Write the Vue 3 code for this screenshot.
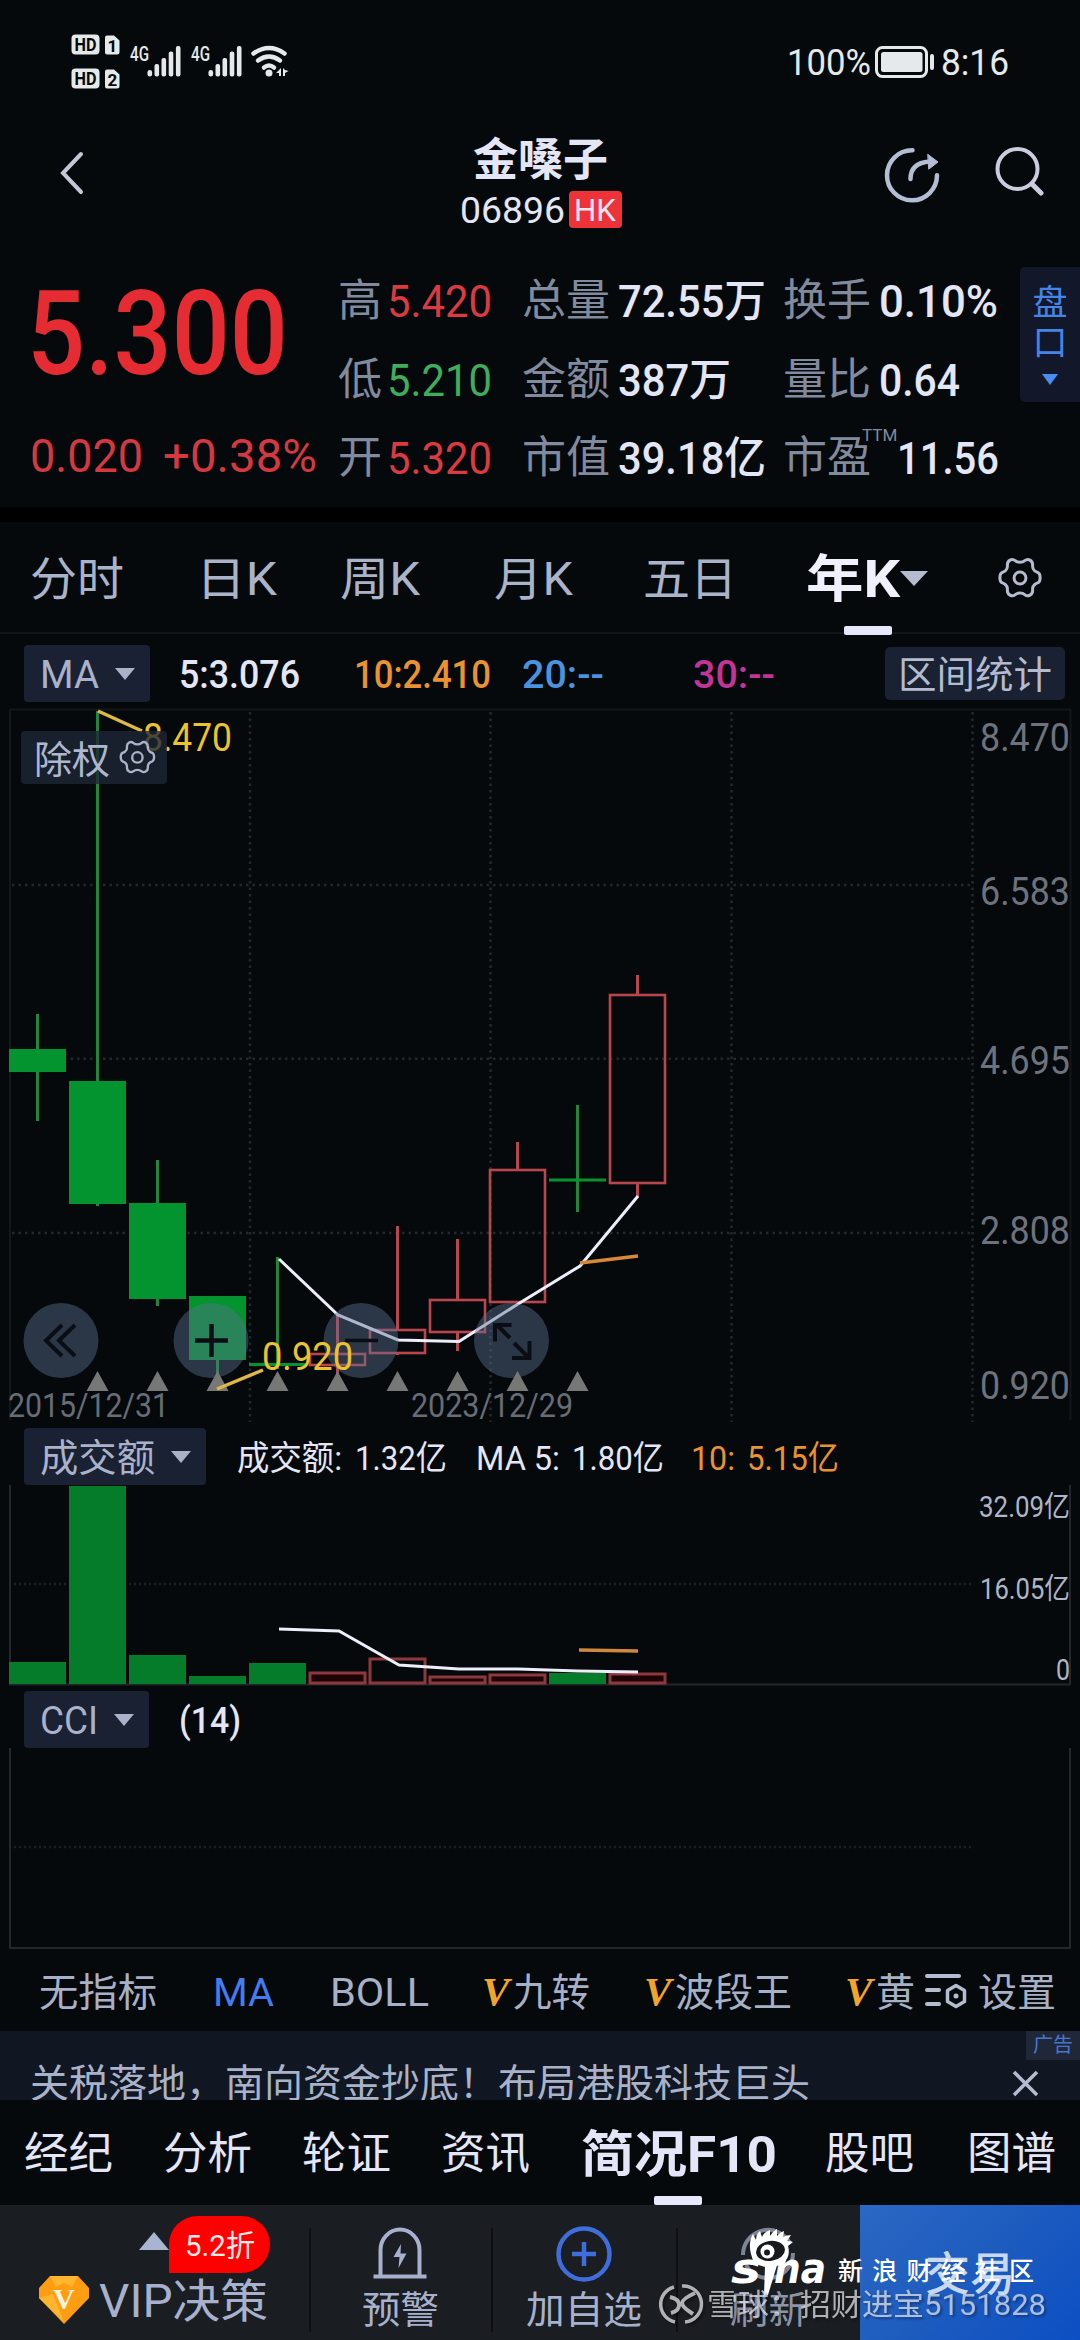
<template>
  <div class="stock-page">
    <!-- Status bar -->
    <div class="status-bar">
      <svg class="status-left" width="222" height="60" viewBox="70 30 222 60">
        <g v-for="(n, i) in [1, 2]" :key="n" :transform="`translate(0 ${i * 34})`">
          <rect x="71.5" y="34.5" width="28" height="20" rx="4" fill="#e6e9e9" />
          <text x="74.500" y="51" class="hd" textLength="22" lengthAdjust="spacingAndGlyphs">HD</text>
          <path d="M107 35.500h7l5.500 5v11.500a2.500 2.500 0 0 1-2.500 2.500h-10a2 2 0 0 1-2-2v-15a2 2 0 0 1 2-2z" fill="#e6e9e9" />
          <text x="107.500" y="51.500" class="hd sim">{{ n }}</text>
        </g>
        <g v-for="x in [0, 61]" :key="x" :transform="`translate(${x} 0)`" fill="#e6e9e9">
          <text x="130" y="60.500" class="net" textLength="19" lengthAdjust="spacingAndGlyphs">4G</text>
          <rect x="147.500" y="70" width="4.600" height="6.500" rx="2.200" />
          <rect x="154.500" y="64" width="4.600" height="12.500" rx="2" />
          <rect x="161.500" y="58" width="4.600" height="18.500" rx="2" />
          <rect x="168.700" y="51.500" width="4.600" height="25" rx="2" />
          <rect x="175.900" y="46" width="4.600" height="30.500" rx="2" />
        </g>
        <g fill="none" stroke="#e6e9e9" stroke-width="4.500" stroke-linecap="round">
          <path d="M253.500 53.500q15.500-11 31 0" />
          <path d="M258 60.500q11-8 22 0" />
          <path d="M264 67.500q5-4 10 0" />
        </g>
        <circle cx="269" cy="73" r="3.500" fill="#e6e9e9" />
        <path d="M281 68v8h-2v-3h-3zM283 68v8h2v-3l3.500-2-3.500-1z" fill="#e6e9e9" />
      </svg>
      <div class="status-right">
        <Fit t="100%" :w="84" :s="36" />
        <svg width="62" height="34" viewBox="0 0 62 34">
          <rect x="1.500" y="2.500" width="50" height="29" rx="6" fill="none" stroke="#e6e9e9" stroke-width="3" />
          <rect x="6" y="7" width="41.500" height="20" rx="2.500" fill="#e6e9e9" />
          <rect x="55" y="9" width="4" height="16" rx="2" fill="#e6e9e9" />
        </svg>
        <Fit t="8:16" :w="68" :s="36" />
      </div>
    </div>

    <!-- Title bar -->
    <div class="title-bar">
      <svg class="back" width="26" height="46" viewBox="0 0 26 46" fill="none" stroke="#c3c8d6" stroke-width="4" stroke-linecap="round">
        <path d="M22 4L4 23l18 19" />
      </svg>
      <div class="title-text">
        <div class="stock-name">金嗓子</div>
        <div class="stock-code">
          <Fit t="06896" :w="105" :s="37" />
          <span class="market"><Fit t="HK" :w="42" :s="31" /></span>
        </div>
      </div>
      <div class="title-icons">
        <svg width="56" height="58" viewBox="0 0 56 58" fill="none" stroke="#b3bdd3" stroke-width="4.500" stroke-linecap="round">
          <path d="M28.500 4.300a25 25 0 1 0 24.500 25" />
          <path d="M26.500 33q0-16 19-17.500" />
          <path d="M44 8.500l10 7.500-9 7z" fill="#b3bdd3" stroke-width="1" />
        </svg>
        <svg width="50" height="50" viewBox="0 0 50 50" fill="none" stroke="#c9cddd" stroke-width="4" stroke-linecap="round">
          <circle cx="22.500" cy="23" r="20" />
          <path d="M37 38l9 9" stroke-width="5" />
        </svg>
      </div>
    </div>

    <!-- Quote -->
    <div class="quote">
      <div class="price">
        <Fit class="price-main" t="5.300" :w="261" :s="117" />
        <div class="price-change">
          <Fit t="0.020" :w="113" :s="47" />
          <Fit t="+0.38%" :w="154" :s="47" />
        </div>
      </div>
      <div class="facts">
        <template v-for="row in facts" :key="row[0].label">
          <div v-for="f in row" :key="f.label" class="fact">
            <span class="fact-label">{{ f.label }}<i v-if="f.sup" class="sup">{{ f.sup }}</i></span>
            <Fit class="fact-value" :class="[f.tone, { shifted: f.sup }]" :t="f.value" :w="f.w" :s="44" />
          </div>
        </template>
      </div>
      <div class="panel-btn">
        <span>盘</span>
        <span>口</span>
        <svg width="16" height="11" viewBox="0 0 16 11"><path d="M0 0h16l-8 11z" fill="#4a8df2" /></svg>
      </div>
    </div>
    <div class="band"></div>

    <!-- Period tabs -->
    <div class="periods">
      <Fit v-for="p in periods" :key="p.t" :t="p.t" :w="p.w" :s="46" />
      <div class="period-active">
        <Fit t="年K" :w="94" :s="51" />
        <svg width="28" height="15" viewBox="0 0 28 15"><path d="M0 0h28l-14 15z" fill="#b4bbcd" /></svg>
        <i class="underline"></i>
      </div>
      <svg class="gear" width="42" height="42" viewBox="0 0 24 24" fill="none" stroke="#b5bccd" stroke-width="1.700" stroke-linejoin="round">
        <path :d="gear" />
        <circle cx="12" cy="12" r="3.400" />
      </svg>
    </div>

    <!-- MA line -->
    <div class="ma-row">
      <div class="select"><Fit t="MA" :w="59" :s="38" /><svg width="20" height="12" viewBox="0 0 20 12"><path d="M0 0h20l-10 12z" /></svg></div>
      <Fit class="ma5" t="5:3.076" :w="121" :s="38" />
      <Fit class="ma10" t="10:2.410" :w="137" :s="38" />
      <Fit class="ma20" t="20:--" :w="82" :s="38" />
      <Fit class="ma30" t="30:--" :w="82" :s="38" />
      <div class="range-btn"><Fit t="区间统计" :w="154" :s="38" /></div>
    </div>

    <!-- Candles -->
    <svg class="chart" width="1080" height="720" viewBox="0 708 1080 720">
      <g stroke="#12171d" stroke-width="2" fill="none">
        <path d="M10 709.500H1071M10 709V1420M1070.500 709V1420" />
      </g>
      <g stroke="#22282e" stroke-width="2.500" stroke-dasharray="2.500 4" fill="none">
        <path v-for="x in [250, 490.500, 731.500, 972.500]" :key="x" :d="`M${x} 712V1422`" />
        <path v-for="y in [885, 1058.700, 1233]" :key="y" :d="`M12 ${y}H972`" />
      </g>
      <g class="axis">
        <text v-for="a in priceAxis" :key="a.y" x="980" :y="a.y" textLength="90" lengthAdjust="spacingAndGlyphs">{{ a.t }}</text>
      </g>
      <g v-for="(c, i) in candles" :key="i">
        <template v-if="c.up">
          <path :d="`M${cx(i)} ${c.high}V${c.top}M${cx(i)} ${c.bottom}V${c.low}`" stroke="#b9464d" stroke-width="3" />
          <rect :x="cx(i) - 27.500" :y="c.top + 1" width="55" :height="c.bottom - c.top - 2" fill="none" stroke="#b9464d" stroke-width="2.600" />
        </template>
        <template v-else>
          <path :d="`M${cx(i)} ${c.high}V${c.low}`" stroke="#22863a" stroke-width="3" />
          <rect :x="cx(i) - 28.500" :y="c.top" width="57" :height="c.bottom - c.top" fill="#03932f" />
        </template>
      </g>
      <g fill="none" stroke-width="3">
        <path d="M279 1259L338 1315L398 1340L459 1341.500L518 1304L580 1266L638 1196" stroke="#eceefa" />
        <path d="M580 1263L638 1256" stroke="#d9883a" stroke-width="3.500" />
      </g>
      <g class="tag-text">
        <path d="M98 711L142 731" />
        <text x="143" y="750.500" textLength="89" lengthAdjust="spacingAndGlyphs">8.470</text>
      </g>

      <!-- Adjustment badge, half transparent over the candles -->
      <rect x="21" y="731" width="146" height="53" rx="4" fill="#1e2637" fill-opacity=".78" />
      <text x="34" y="773" class="adjust" textLength="76" lengthAdjust="spacingAndGlyphs">除权</text>
      <g transform="translate(120 740) scale(1.450)" fill="none" stroke="#aab3c8" stroke-width="1.600" stroke-linejoin="round">
        <path :d="gear" />
        <circle cx="12" cy="12" r="3.600" />
      </g>

      <!-- Round controls -->
      <circle v-for="x in [61, 211, 361, 511.500]" :key="x" :cx="x" cy="1340.500" r="37.500" fill="#5d7292" fill-opacity=".44" />
      <g fill="none" stroke="#0a0e14" stroke-width="4">
        <path d="M62 1325L46 1340.500L62 1356M75 1325L59 1340.500L75 1356" />
        <path d="M195 1340.500h33M211.500 1324v33" stroke-width="4.500" />
        <path d="M345 1340.500h33" stroke-width="3.500" />
        <path d="M510 1338l-14-14M511.500 1325h-16.500v16.500" />
        <path d="M514 1343l14 14M512 1358h17.500v-17" />
      </g>
      <path v-for="i in 9" :key="i" :d="`M${cx(i)} 1371l11 20h-22z`" fill="#757875" />
      <g class="tag-text">
        <path d="M217 1389L263 1370" />
        <text x="262" y="1370" textLength="91" lengthAdjust="spacingAndGlyphs">0.920</text>
      </g>
      <g class="dates">
        <text x="8" y="1416.500" textLength="161" lengthAdjust="spacingAndGlyphs">2015/12/31</text>
        <text x="411" y="1416.500" textLength="162" lengthAdjust="spacingAndGlyphs">2023/12/29</text>
      </g>
    </svg>

    <!-- Turnover -->
    <div class="vol-row">
      <div class="select"><Fit t="成交额" :w="115" :s="38" /><svg width="20" height="12" viewBox="0 0 20 12"><path d="M0 0h20l-10 12z" /></svg></div>
      <Fit t="成交额:" :w="105" :s="34" />
      <Fit t="1.32亿" :w="92" :s="34" />
      <Fit t="MA 5:" :w="84" :s="34" />
      <Fit t="1.80亿" :w="92" :s="34" />
      <Fit class="ma10" t="10:" :w="44" :s="34" />
      <Fit class="ma10" t="5.15亿" :w="92" :s="34" />
    </div>
    <svg class="chart" width="1080" height="206" viewBox="0 1485 1080 206">
      <path d="M10 1485V1684.500H1070V1485" fill="none" stroke="#23272c" stroke-width="2" />
      <path d="M14 1584H972" stroke="#1b2026" stroke-width="2.500" stroke-dasharray="2 3" />
      <g v-for="(v, i) in volumes" :key="i">
        <rect v-if="v.up" :x="cx(i) - 27.500" :y="v.y" width="55" :height="1683 - v.y" :fill="v.y > 1665 ? '#1c0306' : 'none'" stroke="#8e383d" stroke-width="3" />
        <rect v-else :x="cx(i) - 28.500" :y="v.y" width="57" :height="1684 - v.y" fill="#047c2a" />
      </g>
      <g fill="none" stroke-width="3.500">
        <path d="M279 1629L339 1631L399 1665L459 1669H518L578 1671L638 1672" stroke="#eceefa" stroke-width="3" />
        <path d="M579 1650L638 1651" stroke="#d0873f" />
      </g>
      <g class="vol-axis">
        <text x="979" y="1516.500" textLength="91" lengthAdjust="spacingAndGlyphs">32.09亿</text>
        <text x="980" y="1598.500" textLength="90" lengthAdjust="spacingAndGlyphs">16.05亿</text>
        <text x="1056" y="1680" textLength="14" lengthAdjust="spacingAndGlyphs">0</text>
      </g>
    </svg>

    <!-- CCI -->
    <div class="cci-row">
      <div class="select"><Fit t="CCI" :w="58" :s="38" /><svg width="20" height="12" viewBox="0 0 20 12"><path d="M0 0h20l-10 12z" /></svg></div>
      <Fit t="(14)" :w="62" :s="36" />
    </div>
    <svg class="chart" width="1080" height="203" viewBox="0 1748 1080 203">
      <path d="M10 1748V1948H1070V1748" fill="none" stroke="#23272c" stroke-width="2" />
      <path d="M14 1847H972" stroke="#1b2026" stroke-width="2.500" stroke-dasharray="2 3" />
    </svg>

    <!-- Indicator tabs -->
    <div class="indicators">
      <Fit t="无指标" :w="118" :s="39" />
      <Fit class="on" t="MA" :w="61" :s="39" />
      <Fit t="BOLL" :w="99" :s="39" />
      <span class="vip"><b>V</b><Fit t="九转" :w="77" :s="39" /></span>
      <span class="vip"><b>V</b><Fit t="波段王" :w="117" :s="39" /></span>
      <span class="vip clipped"><b>V</b><Fit t="黄" :w="39" :s="39" /></span>
      <span class="settings">
        <svg width="44" height="40" viewBox="0 0 44 40" fill="none" stroke="#b4bcd0" stroke-width="4" stroke-linecap="round">
          <path d="M3 5h32M3 19h12M3 33h12" />
          <path d="M32 14.500l8.500 5v11l-8.500 5-8.500-5v-11z" stroke-linejoin="round" stroke-width="3.500" />
          <circle cx="32" cy="25" r="2.500" fill="#b4bcd0" stroke="none" />
        </svg>
        <Fit t="设置" :w="78" :s="39" />
      </span>
    </div>

    <!-- Ad -->
    <div class="ad">
      <Fit t="关税落地，南向资金抄底！布局港股科技巨头" :w="780" :s="39" />
      <svg class="ad-close" width="28" height="28" viewBox="0 0 28 28" stroke="#b4bcd0" stroke-width="3.500"><path d="M2 2l23 23M25 2L2 25" /></svg>
      <span class="ad-tag">广告</span>
    </div>

    <!-- Section tabs -->
    <div class="sections">
      <Fit v-for="s in sections.slice(0, 4)" :key="s" :t="s" :w="89" :s="44.500" />
      <div class="section-active">
        <Fit t="简况F10" :w="196" :s="50" />
        <i class="underline"></i>
      </div>
      <Fit v-for="s in sections.slice(4)" :key="s" :t="s" :w="89" :s="44.500" />
    </div>

    <!-- Bottom bar -->
    <div class="bottom">
      <div class="vip-cell">
        <svg width="50" height="48" viewBox="0 0 50 48">
          <path d="M11 0h28l11 12v10L25 48 0 22V12z" fill="#ff9d12" />
          <path d="M11 0h28l-6 11-8-4-8 4zM0 22l14-4 11 28z" fill="#ffb52e" />
          <text x="14" y="33" class="gem">V</text>
        </svg>
        <Fit t="VIP决策" :w="169" :s="46" />
        <svg class="up-mark" width="30" height="18" viewBox="0 0 30 18"><path d="M0 18L15 0l15 18z" fill="#a7b4d2" /></svg>
        <span class="badge"><Fit t="5.2折" :w="70" :s="30" /></span>
      </div>
      <div class="cell">
        <svg width="56" height="54" viewBox="0 0 56 54" fill="none" stroke="#a7b1cd" stroke-width="4">
          <path d="M8.500 49V24a19.500 20.500 0 0 1 39 0v25M1.500 50.500h53" />
          <path d="M29 18l-7.500 13h6l-1 11 8-14.500h-6z" fill="#a7b1cd" stroke="none" />
        </svg>
        <Fit t="预警" :w="77" :s="38" />
      </div>
      <div class="cell">
        <svg width="56" height="56" viewBox="0 0 56 56" fill="none" stroke="#3f6ddb" stroke-width="4.500">
          <circle cx="28" cy="28" r="25.500" />
          <path d="M16 28h24M28 16v24" />
        </svg>
        <Fit t="加自选" :w="116" :s="38" />
      </div>
      <div class="cell last">
        <svg width="56" height="56" viewBox="0 0 56 56" fill="none" stroke="#7e8496" stroke-width="4">
          <path d="M3 29a25 25 0 0 1 47-12M53 27a25 25 0 0 1-47 12" />
        </svg>
        <Fit t="刷新" :w="77" :s="38" />
      </div>
      <div class="trade"><Fit t="交易" :w="90" :s="46" /></div>

      <!-- Source marks laid over the bar -->
      <svg class="marks" width="360" height="115" viewBox="650 2220 360 115">
        <g fill="#fff">
          <path d="M751 2254q-3-12 2-20l3 6q0-6 4-9l2 6q2-5 8-7l0 6q3-5 7-7l0 7q3-4 7-5l-1 6q4-2 8-2l-4 6q4 0 6 1l-5 4q3 11-5 17q-7 5-16 4q-14-1-16-13z" />
          <ellipse cx="770.500" cy="2251" rx="14.500" ry="10" transform="rotate(-8 770 2251)" fill="#17191d" />
          <circle cx="767.500" cy="2251.500" r="7" />
          <circle cx="767" cy="2252.500" r="3" fill="#17191d" />
          <path d="M765 2266l8-4h5l-10 33h-4z" />
          <text x="731" y="2283" class="sina" textLength="30" lengthAdjust="spacingAndGlyphs">s</text>
          <text x="774" y="2283" class="sina" textLength="52" lengthAdjust="spacingAndGlyphs">na</text>
          <text x="838" y="2280" class="club" textLength="196">新浪财经社区</text>
        </g>
        <g class="shade" opacity=".76">
          <g fill="none" stroke="#dfe0e4" stroke-width="3.500">
            <path d="M675 2322a18 18 0 0 1-1-35M682 2286a18 18 0 0 1 3 36" />
            <path d="M670 2297q9 2 9 8t-8 8M695 2293q-13 6-13 10t11 11" stroke-width="4" />
          </g>
          <text x="707" y="2315" class="owner" textLength="339" lengthAdjust="spacingAndGlyphs">雪球：招财进宝5151828</text>
        </g>
      </svg>
    </div>
  </div>
</template>

<script setup>
import { h } from 'vue'

const Fit = (props) =>
  h('svg', { class: 'fit', width: props.w, height: props.s }, [
    h('text', {
      x: 0,
      y: props.s * 0.87,
      'font-size': props.s,
      textLength: props.w,
      lengthAdjust: 'spacingAndGlyphs'
    }, props.t)
  ])
Fit.props = ['t', 'w', 's']

// Six soft lobes, notched at the top and bottom
const gear = 'M12 3Q13.700 3 14.700 2.100Q16.200 .9 17.700 1.800Q19.400 2.800 19.200 4.800Q19 6.800 20.400 7.900Q21.200 8.500 22.300 8.900Q23.500 9.500 23.500 11.800Q23.500 14.100 22.300 14.700Q21.200 15.100 20.400 15.700Q19 16.800 19.200 18.800Q19.400 20.800 17.700 21.800Q16.200 22.700 14.700 21.500Q13.700 20.600 12 20.600Q10.300 20.600 9.300 21.500Q7.800 22.700 6.300 21.800Q4.600 20.800 4.800 18.800Q5 16.800 3.600 15.700Q2.800 15.100 1.700 14.700Q.5 14.100 .5 11.800Q.5 9.500 1.700 8.900Q2.800 8.500 3.600 7.900Q5 6.800 4.800 4.800Q4.600 2.800 6.300 1.800Q7.800 .9 9.300 2.100Q10.300 3 12 3Z'

const facts = [
  [
    { label: '高', value: '5.420', w: 105, tone: 'red' },
    { label: '总量', value: '72.55万', w: 148 },
    { label: '换手', value: '0.10%', w: 119 }
  ],
  [
    { label: '低', value: '5.210', w: 105, tone: 'green' },
    { label: '金额', value: '387万', w: 113 },
    { label: '量比', value: '0.64', w: 81 }
  ],
  [
    { label: '开', value: '5.320', w: 105, tone: 'red' },
    { label: '市值', value: '39.18亿', w: 148 },
    { label: '市盈', value: '11.56', w: 102, sup: 'TTM' }
  ]
]

const periods = [
  { t: '分时', w: 94 },
  { t: '日K', w: 81 },
  { t: '周K', w: 80 },
  { t: '月K', w: 79 },
  { t: '五日', w: 94 }
]

const sections = ['经纪', '分析', '轮证', '资讯', '股吧', '图谱']

const priceAxis = [
  { t: '8.470', y: 751 },
  { t: '6.583', y: 905 },
  { t: '4.695', y: 1074 },
  { t: '2.808', y: 1244 },
  { t: '0.920', y: 1399 }
]

const cx = (i) => 37.5 + i * 60

const candles = [
  { high: 1014, top: 1049, bottom: 1072, low: 1121 },
  { high: 711, top: 1081, bottom: 1204, low: 1206 },
  { high: 1160, top: 1203, bottom: 1299, low: 1306 },
  { high: 1296, top: 1296, bottom: 1360, low: 1389 },
  { high: 1257, top: 1363, bottom: 1366, low: 1369 },
  { high: 1315, top: 1353, bottom: 1366, low: 1375, up: true },
  { high: 1226, top: 1329, bottom: 1354, low: 1355, up: true },
  { high: 1239, top: 1299, bottom: 1333, low: 1351, up: true },
  { high: 1142, top: 1169, bottom: 1303, low: 1303, up: true },
  { high: 1105, top: 1178.5, bottom: 1181.5, low: 1212 },
  { high: 975, top: 994, bottom: 1184, low: 1197, up: true }
]

const volumes = [
  { y: 1662 },
  { y: 1486 },
  { y: 1655 },
  { y: 1676 },
  { y: 1663 },
  { y: 1673, up: true },
  { y: 1659, up: true },
  { y: 1677, up: true },
  { y: 1675, up: true },
  { y: 1673 },
  { y: 1674, up: true }
]
</script>

<style>
body {
  background: #05090c;
}

.fit {
  display: block;
  flex: none;
  overflow: visible;
}

.fit text {
  fill: currentColor;
  white-space: pre;
}
</style>

<style scoped>
.stock-page {
  width: 1080px;
  height: 2340px;
  overflow: hidden;
  background: #05090c;
  color: #e4e6f6;
  font-family: Roboto, "Noto Sans CJK SC", sans-serif;
}

.stock-page svg {
  display: block;
  flex: none;
}

.status-bar {
  height: 120px;
  box-sizing: border-box;
  padding: 30px 68px 0 70px;
  display: flex;
  justify-content: space-between;
}

.hd {
  font-size: 18px;
  font-weight: 700;
  fill: #05090c;
}

.sim {
  font-size: 17px;
}

.net {
  font-size: 20px;
  font-weight: 500;
}

.status-right {
  display: flex;
  align-items: center;
  height: 64px;
  gap: 4px;
  color: #e6e9e9;
  margin-right: 3px;
}

.title-bar {
  height: 128px;
  display: grid;
  grid-template-columns: 398px 285px 397px;
}

.back {
  margin: 30px 0 0 59px;
}

.title-text {
  display: flex;
  flex-direction: column;
  align-items: center;
}

.stock-name {
  margin-top: 19px;
  height: 44px;
  line-height: 44px;
  font-size: 45px;
  font-weight: 700;
}

.stock-code {
  display: flex;
  align-items: center;
  gap: 4px;
  margin-top: 8px;
}

.market {
  display: flex;
  align-items: center;
  justify-content: center;
  width: 53px;
  height: 37px;
  border-radius: 4px;
  background: #ee3338;
}

.title-icons {
  display: flex;
  justify-content: space-between;
  padding: 26px 35px 0 201px;
}

.quote {
  height: 259px;
  display: grid;
  grid-template-columns: 338px 682px 60px;
}

.price {
  color: #e62c33;
  padding-left: 27px;
}

.price-main {
  margin-top: 24px;
  font-weight: 500;
}

.price-change {
  display: flex;
  gap: 20px;
  margin-top: 42px;
  margin-left: 3px;
  color: #d5383f;
}

.facts {
  display: grid;
  grid-template-columns: 184px 261px 237px;
  grid-template-rows: repeat(3, 78.5px);
  margin-top: 14px;
}

.fact {
  display: flex;
  align-items: center;
  gap: 8px;
  font-weight: 500;
}

.fact-label {
  position: relative;
  font-size: 44px;
  line-height: 1;
  font-weight: 400;
  color: #828a9e;
}

.sup {
  position: absolute;
  top: -9px;
  left: 79px;
  font-size: 17px;
  font-style: normal;
}

.shifted {
  margin-left: 18px;
}

.red {
  color: #db3a40;
  font-weight: 400;
  margin-left: -3px;
}

.green {
  color: #3fae5c;
  font-weight: 400;
  margin-left: -3px;
}

.panel-btn {
  display: flex;
  flex-direction: column;
  align-items: center;
  height: 135px;
  margin-top: 19px;
  box-sizing: border-box;
  padding-top: 17px;
  border-radius: 5px 0 0 5px;
  background: #121829;
  color: #4585e6;
  font-size: 35px;
  line-height: 40px;
}

.panel-btn svg {
  margin-top: 10px;
}

.band {
  height: 15px;
  background: #000;
}

.periods {
  height: 112px;
  box-sizing: border-box;
  padding-left: 30px;
  display: grid;
  grid-template-columns: 166px 144px 154px 149px 163px 193px 60px;
  align-items: center;
  color: #aab3c7;
  border-bottom: 2px solid #12161c;
}

.period-active {
  position: relative;
  display: flex;
  align-items: center;
  height: 112px;
  color: #f0f1fc;
  font-weight: 700;
}

.gear {
  overflow: visible;
}

.underline {
  position: absolute;
  left: 38px;
  bottom: -1px;
  width: 48px;
  height: 9px;
  border-radius: 2px;
  background: #e6e8fb;
}

.ma-row {
  height: 74px;
  box-sizing: border-box;
  display: grid;
  grid-template-columns: 155px 175px 168px 171px 192px 180px;
  padding: 5px 0 0 24px;
  align-items: center;
  font-weight: 500;
}

.select {
  display: flex;
  align-items: center;
  justify-self: start;
  gap: 16px;
  height: 57px;
  padding: 0 15px 0 16px;
  border-radius: 4px;
  background: #1a2133;
  color: #a9b2c9;
  fill: #a9b2c9;
  font-weight: 400;
}

.range-btn {
  display: flex;
  align-items: center;
  justify-content: center;
  height: 53px;
  border-radius: 5px;
  background: #1a2133;
  color: #b4bbcf;
  font-weight: 400;
}

.ma10 {
  color: #ea922f;
}

.ma20 {
  color: #4b92df;
}

.ma30 {
  color: #c23496;
}

.chart text {
  font-size: 39px;
}

.chart .axis text {
  fill: #6d727c;
}

.tag-text path {
  stroke: #dfb743;
  stroke-width: 3.5;
}

.tag-text text {
  fill: #edc32d;
}

.chart .adjust {
  font-size: 38px;
  fill: #aeb7ce;
}

.chart .dates text {
  font-size: 33px;
  fill: #686c74;
}

.chart .vol-axis text {
  font-size: 29px;
  fill: #aeb5c6;
}

.vol-row {
  height: 57px;
  padding-left: 24px;
  display: grid;
  grid-template-columns: 213px 118px 121px 96px 119px 56px 92px;
  align-items: center;
}

.cci-row {
  height: 57px;
  padding-left: 24px;
  display: grid;
  grid-template-columns: 155px 62px;
  align-items: center;
  font-weight: 500;
}

.indicators {
  height: 80px;
  display: grid;
  grid-template-columns: 174px 117px 152px 162px 201px 71px 164px;
  align-items: center;
  padding-left: 39px;
  color: #a7b0c5;
}

.on {
  color: #427cf0;
}

.vip {
  display: flex;
  align-items: center;
}

.vip b {
  width: 31px;
  font: italic 700 41px "Liberation Serif", serif;
  color: #f3a42a;
}

.clipped {
  overflow: hidden;
}

.settings {
  display: flex;
  align-items: center;
  gap: 10px;
  margin-left: 8px;
}

.ad {
  position: relative;
  height: 69px;
  overflow: hidden;
  box-sizing: border-box;
  padding: 32px 40px 0 30px;
  display: flex;
  justify-content: space-between;
  background: #111722;
  color: #a9b2c8;
}

.ad-close {
  margin-top: 7px;
}

.ad-tag {
  position: absolute;
  top: 0;
  right: 0;
  width: 54px;
  height: 29px;
  line-height: 29px;
  text-align: center;
  font-size: 20px;
  color: #4477cf;
  background: #202738;
}

.sections {
  height: 105px;
  padding-left: 24px;
  display: grid;
  grid-template-columns: 139px 139px 139px 140px 244px 142px 89px;
  align-items: center;
  color: #e4e6f8;
}

.section-active {
  position: relative;
  display: flex;
  align-items: center;
  height: 105px;
  font-weight: 700;
}

.section-active .underline {
  left: 73px;
  bottom: 0;
}

.bottom {
  position: relative;
  height: 135px;
  display: grid;
  grid-template-columns: 309px 182px 185px 184px 220px;
  background: #1a1d21;
  color: #a7b1cd;
}

.vip-cell {
  position: relative;
  display: flex;
  align-items: center;
  gap: 10px;
  padding: 55px 0 0 39px;
}

.up-mark {
  position: absolute;
  left: 139px;
  top: 27px;
}

.badge {
  position: absolute;
  left: 169px;
  top: 11px;
  width: 101px;
  height: 57px;
  display: flex;
  align-items: center;
  justify-content: center;
  border-radius: 29px 29px 29px 0;
  background: #fd0000;
  color: #ffe9e4;
}

.cell {
  display: flex;
  flex-direction: column;
  align-items: center;
  justify-content: space-between;
  padding: 21px 0 12px;
  background: linear-gradient(#0d0f12, #0d0f12) left 23px / 2px 104px no-repeat;
}

.cell.last {
  color: #8d94a8;
}

.trade {
  display: flex;
  align-items: center;
  justify-content: center;
  background: linear-gradient(135deg, #2b68c4, #1d5bbe 50%, #0c4fc4);
  color: #c9d8ee;
  font-weight: 500;
}

.marks {
  position: absolute;
  left: 650px;
  top: 15px;
  overflow: visible;
}

.gem {
  font: 700 30px "Liberation Serif", serif;
  fill: #fff3dc;
}

.sina {
  font: italic 700 43px "DejaVu Sans", sans-serif;
}

.club {
  font-size: 25px;
  font-weight: 500;
}

.owner {
  font-size: 30px;
  fill: #dfe0e4;
}

.shade {
  filter: drop-shadow(2px 2px 1px rgba(0, 0, 0, .4));
}
</style>
